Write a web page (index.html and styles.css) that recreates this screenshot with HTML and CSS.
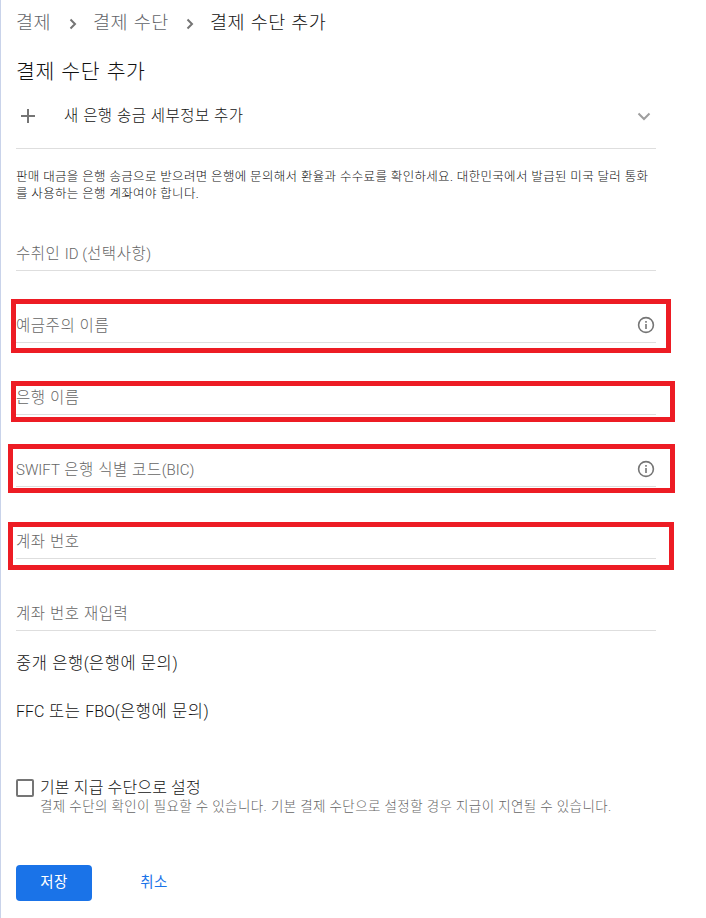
FILE: index.html
```
<!DOCTYPE html>
<html lang="ko">

<head>
  <meta charset="UTF-8">
  <meta name="viewport" content="width=device-width, initial-scale=1.0">
  <title>결제 수단 추가</title>
  <link rel="stylesheet" href="styles.css">
</head>

<body>

  <div class="container">
    <nav class="breadcrumb">
      <a class="crumb-first">결제</a>
      <svg class="crumb-arrow" width="8" height="12" viewBox="0 0 8 12"><path d="M1.5 1.5L6 6L1.5 10.5" /></svg>
      <a class="crumb-second">결제 수단</a>
      <svg class="crumb-arrow" width="8" height="12" viewBox="0 0 8 12"><path d="M1.5 1.5L6 6L1.5 10.5" /></svg>
      <span class="current">결제 수단 추가</span>
    </nav>

    <h1>결제 수단 추가</h1>

    <div class="add-row">
      <svg class="plus" width="14" height="14" viewBox="0 0 14 14"><path d="M7 0V14M0 7H14" /></svg>
      <span class="add-text">새 은행 송금 세부정보 추가</span>
      <svg class="chevron" width="14" height="9" viewBox="0 0 14 9"><path d="M1.5 1.5L7 7L12.5 1.5" /></svg>
    </div>

    <p class="notice">판매 대금을 은행 송금으로 받으려면 은행에 문의해서 환율과 수수료를 확인하세요. 대한민국에서 발급된 미국 달러 통화<br>를 사용하는 은행 계좌여야 합니다.</p>

    <form class="form">
      <div class="field">
        <label>수취인 <span class="latin">ID (</span>선택사항<span class="latin">)</span></label>
      </div>
      <div class="field">
        <label>예금주의 이름</label>
        <svg class="info" width="18" height="18" viewBox="0 0 18 18"><circle cx="9" cy="9" r="7.4" /><path d="M9 8V13M9 5V6.7" /></svg>
        <div class="mark mark-holder"></div>
      </div>
      <div class="field">
        <label>은행 이름</label>
        <div class="mark mark-bank"></div>
      </div>
      <div class="field">
        <label><span class="latin">SWIFT</span> 은행 식별 코드<span class="latin">(BIC)</span></label>
        <svg class="info" width="18" height="18" viewBox="0 0 18 18"><circle cx="9" cy="9" r="7.4" /><path d="M9 8V13M9 5V6.7" /></svg>
        <div class="mark mark-swift"></div>
      </div>
      <div class="field">
        <label>계좌 번호</label>
        <div class="mark mark-account"></div>
      </div>
      <div class="field">
        <label>계좌 번호 재입력</label>
      </div>

      <div class="section">중개 은행<span class="latin">(</span>은행에 문의<span class="latin">)</span></div>
      <div class="section"><span class="latin">FFC</span> 또는 <span class="latin">FBO(</span>은행에 문의<span class="latin">)</span></div>

      <div class="default-option">
        <span class="checkbox"></span>
        <div>
          <div class="option-title">기본 지급 수단으로 설정</div>
          <div class="option-help">결제 수단의 확인이 필요할 수 있습니다. 기본 결제 수단으로 설정할 경우 지급이 지연될 수 있습니다.</div>
        </div>
      </div>

      <div class="actions">
        <button type="button" class="save">저장</button>
        <button type="button" class="cancel">취소</button>
      </div>
    </form>
  </div>

</body>

</html>
```
FILE: styles.css
```
* {
  box-sizing: border-box;
}

body {
  margin: 0;
  height: 918px;
  overflow: hidden;
  background-color: white;
  border-left: 1px solid #c9d3ea;
  font-family: Roboto, "Noto Sans CJK KR", sans-serif;
  font-weight: 300;
  color: #111;
}

.container {
  width: 655px;
  padding-left: 15px;
}

svg {
  display: block;
  fill: none;
  stroke: #757575;
  stroke-width: 2;
  flex: none;
}

.latin {
  font-size: 15px;
  letter-spacing: 0;
}

.breadcrumb {
  display: flex;
  align-items: center;
  height: 46px;
  font-size: 18.5px;
  line-height: 46px;
  letter-spacing: 0.5px;
  word-spacing: 0.6px;
  white-space: nowrap;
  color: #5f6368;
}

.crumb-first {
  width: 53px;
}

.crumb-second {
  width: 93px;
}

.crumb-arrow {
  width: 8px;
  margin: 2px 16px 0 0;
}

.current {
  color: #111;
}

h1 {
  margin: 8px 0 0;
  height: 36px;
  font-size: 20.5px;
  font-weight: 300;
  line-height: 36px;
  letter-spacing: 0.6px;
  word-spacing: 0.8px;
}

.add-row {
  display: flex;
  align-items: center;
  height: 59px;
  padding: 0 5px 6px;
  border-bottom: 1px solid #dedede;
  font-size: 15.5px;
  letter-spacing: 0.45px;
  word-spacing: 0.2px;
}

.add-text {
  flex: 1;
  margin: -4px 0 0 29px;
}

.chevron {
  stroke: #9e9e9e;
}

.notice {
  margin: 19px 0 0;
  height: 31px;
  font-size: 12.5px;
  line-height: 17px;
  letter-spacing: 0.33px;
  word-spacing: 0.15px;
  white-space: nowrap;
}

.field {
  position: relative;
  display: flex;
  justify-content: space-between;
  align-items: flex-end;
  height: 72px;
  padding-bottom: 6px;
  border-bottom: 1px solid #dedede;
  font-size: 15.5px;
  line-height: 20px;
  letter-spacing: 0.55px;
  color: #666;
}

.info {
  margin: 0 1px 2px 0;
  stroke-width: 1.6;
}

/* red highlight frames over the required fields */
.mark {
  position: absolute;
  border: 5px solid #ed1c24;
}

.mark-holder {
  top: 28px;
  right: -15px;
  bottom: -11px;
  left: -5px;
}

.mark-bank {
  top: 38px;
  right: -19px;
  bottom: -8px;
  left: -5px;
}

.mark-swift {
  top: 29px;
  right: -19px;
  bottom: -7px;
  left: -8px;
}

.mark-account {
  top: 35px;
  right: -18px;
  bottom: -12px;
  left: -8px;
}

.section {
  height: 48px;
  padding-top: 9px;
  font-size: 16.5px;
  line-height: 48px;
  letter-spacing: 0.6px;
}

.section .latin {
  font-size: 16px;
}

.default-option {
  display: flex;
  margin-top: 51px;
}

.checkbox {
  width: 18px;
  height: 18px;
  margin: 1px 6px 0 0;
  border: 2px solid #757575;
  border-radius: 2px;
}

.option-title {
  font-size: 16px;
  line-height: 20px;
  letter-spacing: 0.15px;
}

.option-help {
  margin-top: -1px;
  font-size: 13.5px;
  line-height: 18px;
  letter-spacing: 0.4px;
  white-space: nowrap;
  color: #666;
}

.actions {
  display: flex;
  gap: 24px;
  margin-top: 50px;
}

.actions button {
  height: 36px;
  padding: 0 0 5px;
  border: none;
  border-radius: 4px;
  background: none;
  font-family: inherit;
  font-size: 14.5px;
  letter-spacing: 0.5px;
  cursor: pointer;
}

.actions .save {
  width: 76px;
  background-color: #1a73e8;
  color: white;
}

.actions .cancel {
  width: 76px;
  color: #1a73e8;
}
```
